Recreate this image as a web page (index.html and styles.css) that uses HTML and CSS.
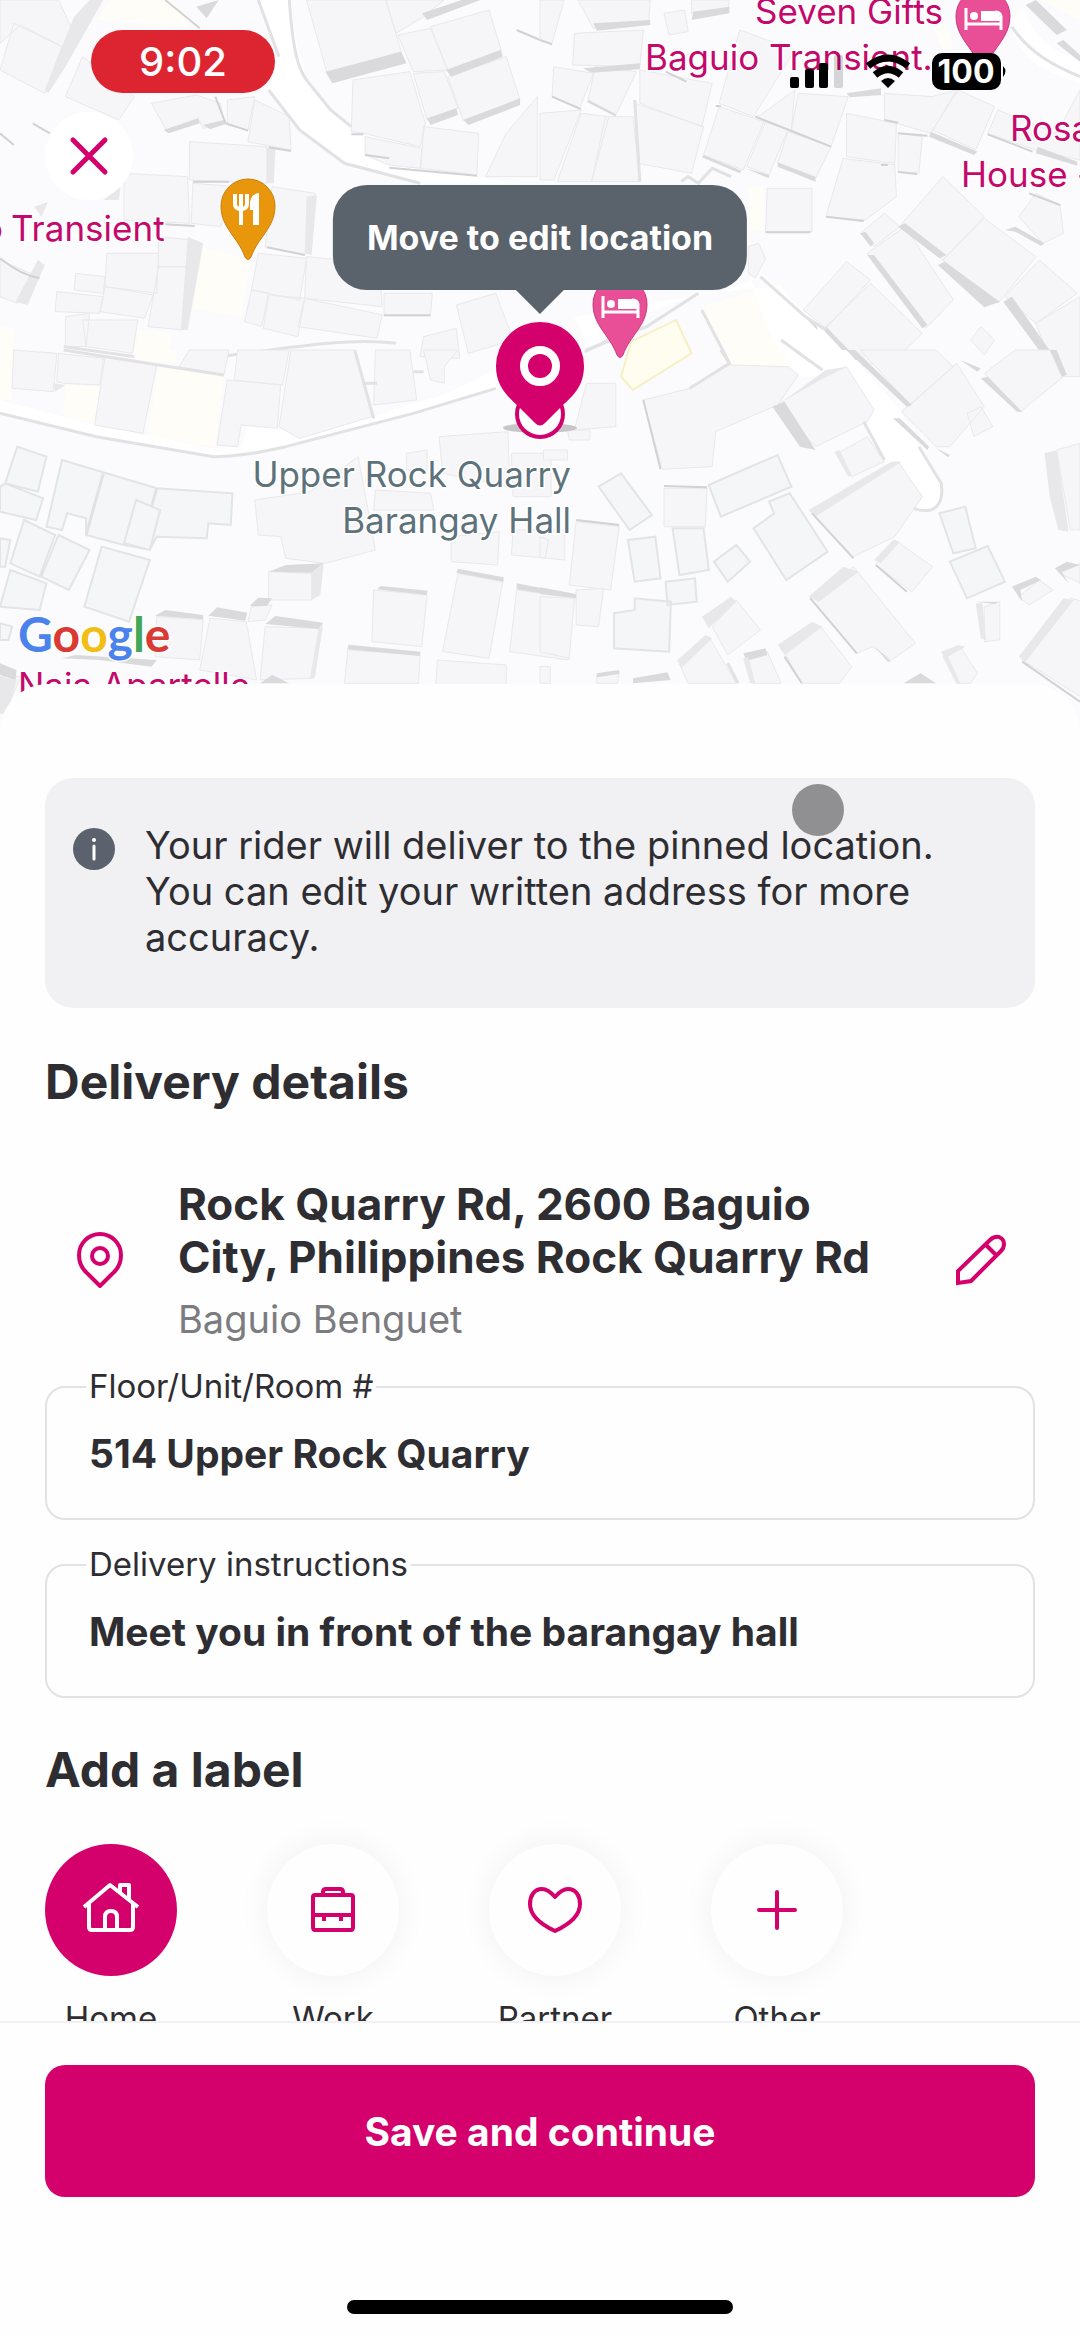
FILE: index.html
```html
<!DOCTYPE html>
<html lang="en">
<head>
<meta charset="utf-8">
<meta name="viewport" content="width=device-width, initial-scale=1">
<title>Delivery address</title>
<link rel="stylesheet" href="styles.css">
</head>
<body>
<div class="screen">
  <header class="map">
    <svg class="map-canvas" viewBox="0 0 1080 732" preserveAspectRatio="xMidYMin slice" aria-hidden="true">
      <rect width="1080" height="732" fill="#fbfbfd"/>
      <!-- north-west -->
      <g transform="scale(.3444 .3333)">
        <path class="garden" d="M590 740L725 780 700 950 560 925ZM320 0H500L550 80 280 60ZM400 990L495 1000V1080H390ZM0 980L40 985V1150H0ZM890 0H960L920 40Z"/>
        <path class="road" d="M750 0L810 170 780 270 870 390 1000 490 1220 550H1500L1385 530 1130 495 1050 400 960 330 885 220 860 120 840 0Z"/>
        <path class="house" d="M40 70L180 140 130 280 0 210ZM0 0H170L210 90 180 140 60 75 0 130ZM240 170L390 290 345 360 190 290ZM440 310L570 285 640 310 650 365 590 385 575 355 485 395ZM660 300L740 290 720 390 660 375ZM740 300L840 350 845 450 720 425ZM550 425L775 440V550L550 540ZM560 550L690 560 640 680 555 670ZM360 520L545 530 550 670 360 660ZM790 560L915 580 885 765 770 740ZM310 760H460L455 880 305 860ZM460 710L560 720 545 800H460ZM460 800H545L530 990 430 980ZM220 820L305 830 300 880 215 870ZM165 875L300 890 290 940 160 935ZM305 860L445 885 420 955 290 935ZM750 760L890 775 870 900 730 870ZM730 870L780 880 760 980 710 965ZM780 885L885 895 865 1010 765 985ZM890 770L1100 790 1110 920 885 895ZM885 895L1110 945 1095 1015 865 980ZM1115 880H1255L1250 948H1115ZM1325 915L1440 880 1490 1020 1360 1060ZM1230 1010L1325 985 1335 1075 1220 1070ZM890 0H1120L1165 155 950 220ZM1120 0H1290L1230 50 1150 100ZM1250 80L1420 30 1455 150 1300 210ZM1155 105L1250 85 1300 210 1200 215ZM1300 230L1470 170 1510 300 1345 360ZM1200 220L1290 215 1330 325 1240 360ZM1025 240L1190 215 1235 370 1220 440 1055 400 1020 395ZM1060 410L1225 445 1220 505 1130 495 1060 465ZM1230 380L1390 400 1385 525 1222 505ZM1470 400L1560 290V530L1410 530ZM0 780L110 830 50 910 0 890ZM190 950L260 940 250 1040 190 1040ZM240 960H400L385 1060 250 1040Z"/>
        <path class="shade soft" d="M215 50L260 0H300L190 200 140 280 130 270ZM775 445H800L795 550H775ZM890 590L920 585 905 765 885 760ZM545 710L590 730 545 990H525ZM100 620L140 605 120 650ZM300 600L350 560 345 600ZM45 905L110 780 130 795 80 915Z"/>
        <path class="shade" d="M945 215L1165 155 1180 190 965 250ZM1225 40L1340 0H1395L1240 60ZM1295 210L1455 150 1460 170 1310 230ZM1240 355L1325 325 1330 345 1250 375ZM1345 360L1510 295V315L1360 375ZM475 390L575 355 580 370 490 400ZM590 375L650 360 655 372 610 388ZM570 20L635 0 600 55Z"/>
        <path class="edge" d="M1500 90L1568 120M0 400L40 435M1060 465L1130 475M1130 503L1385 527M1020 403H1055M780 442L845 453M560 545H665M480 673L565 678M775 742L885 765M1115 946H1250M0 775Q60 825 115 835M480 0L580 85M95 370L145 400M625 290L655 370 720 392"/>
        <path class="kerb" d="M750 0L810 170M780 270L870 390 1000 490 1220 550M840 0C850 150 865 205 890 240L960 330 1020 380M185 1040L460 1080M560 1080C800 1050 1000 1010 1150 1030"/>
      </g>
      <!-- north-east -->
      <g transform="translate(540 0) scale(.3444 .3333)">
        <path class="garden" d="M470 920L700 850 740 1130 550 1130ZM605 560H650V690H610ZM1140 80L1180 70 1200 140 1170 150ZM1450 0H1568V60Z"/>
        <path class="road" d="M140 1050L310 940 460 880 700 860 760 940 640 830 540 870 100 950ZM610 830L650 830 830 990 940 1130H740L650 960ZM1365 80C1400 190 1480 220 1568 250V180C1470 150 1430 100 1400 20Z"/>
        <path class="house" d="M110 0H320L315 70 155 85ZM360 40L420 30 430 95 375 105ZM440 0H550L545 30 440 40ZM100 100L300 90 290 200 95 195ZM0 0H70L35 130 0 120ZM40 200L155 220 115 325 35 290ZM160 200L280 215 220 345 140 300ZM290 210L500 250 470 380 290 310ZM275 310L475 380 440 520 285 490ZM0 340L120 330 40 540 0 540ZM120 340L200 350 150 545H50ZM190 350H270L290 545H150ZM580 90L740 150 620 350 520 310ZM750 280L895 290 845 440 730 390ZM625 350L640 345 740 270 730 390ZM520 320L650 365 590 510 475 465ZM655 365L720 390 665 525 600 500ZM720 395L845 440 800 535 690 490ZM890 340L1035 370 1030 490 890 470ZM880 475L1030 495 1035 590 945 660 830 650ZM1040 400L1110 410 1100 520 1040 515ZM1000 280L1140 290 1210 270 1135 400 1000 360ZM1215 270L1320 320 1265 450 1140 390ZM1330 330L1500 400 1568 270V480L1440 450 1300 400ZM660 565H790V695H655ZM605 740L635 730 655 775 625 835 605 820ZM930 700L1000 640 1045 680 970 740ZM1060 660L1170 530 1290 650 1170 780 1045 680ZM950 760L1060 680 1200 900 1120 985ZM1170 780L1290 655 1440 770 1330 910ZM765 930L890 785 960 840 830 985ZM830 980L960 850 1110 1000 1050 1060 940 1100ZM1350 890L1450 780 1560 880 1440 970ZM1440 970L1568 890V1130H1500ZM1390 650L1440 580 1510 615 1520 700 1460 730ZM1280 980L1320 1020 1290 1065 1250 1020Z"/>
        <path class="shade" d="M155 70L320 60V75L165 92ZM445 35L550 20V40L440 60ZM125 205L290 190V208L150 218ZM1410 15L1440 0 1530 90 1500 105ZM1500 130L1520 120 1568 165V185ZM1040 680L1060 670 1180 765 1160 775ZM1155 795L1175 785 1335 905 1290 922ZM950 765H970L1125 975 1110 985ZM1345 905L1370 890 1500 1080H1470ZM1135 395L1270 455 1260 465 1130 410ZM1445 440L1560 485V497L1440 460ZM690 487L800 530V545L690 500ZM595 505L665 525V535ZM475 465L585 512 580 520 470 472ZM140 300L220 342V350L135 305ZM1350 690L1380 680 1465 730 1455 738 1380 695ZM930 700L945 695 970 730 960 740ZM755 935L805 980V990ZM830 980L925 1080H905L825 992ZM890 280L990 265V285L900 292Z"/>
        <path class="edge" d="M0 120L35 133M35 290L118 327M625 350L845 440M830 650L940 663M655 697H785M1040 400L1125 407M1300 403L1430 455M990 495H1010M1040 516L1095 522M1420 580L1510 615M365 215L425 245M510 318H525M1000 360L1040 368"/>
        <path class="kerb" d="M135 1050L310 980 460 880M640 830L770 950 830 990M470 930L550 1090M700 1020L780 1080M275 300L290 545M1370 80C1420 160 1500 200 1568 230M410 545L430 530 460 550 500 505 555 530"/>
        <path d="M265 1025L395 960 440 1060 270 1170 235 1130Z" fill="#fefdf0" stroke="#f6f0c4" stroke-width="2" vector-effect="non-scaling-stroke"/>
      </g>
      <!-- south-west -->
      <g transform="translate(0 350) scale(.3444 .3333)">
        <path class="garden" d="M460 45L650 80 625 290 430 260ZM190 105L290 110 275 220 185 205ZM390 0H515L510 40 390 30ZM0 0H35V150H0Z"/>
        <path class="road" d="M0 150L275 225 615 295 700 290 720 225 830 240 850 270 1080 200 1300 130 1440 60V115L1200 190 830 290 620 320 280 260 0 190Z"/>
        <path class="house" d="M40 0L165 10 155 125 35 115ZM170 10L300 25 290 105 185 100 165 95ZM305 20L455 45 415 250 275 225ZM660 90L815 105 805 235 700 225 690 290 630 285ZM550 0H665L650 75 520 50ZM690 0H840L820 105 680 90ZM845 0H1030L1080 200 870 265 810 230ZM1090 0H1190L1210 150 1085 165ZM1230 0H1330L1290 50V100L1250 90ZM1275 260L1475 245 1480 410 1285 370ZM1485 310H1600V440H1490ZM1180 310L1240 300V360H1180ZM740 450L900 425 1040 320 1090 600 945 640 830 625 815 560 750 555ZM1090 420L1250 430 1260 480 1085 480ZM1310 560L1450 545 1445 645 1310 635ZM1490 540H1640V630L1485 615ZM1085 720L1240 735 1225 890 1080 875ZM1330 670L1460 695 1420 925 1285 905ZM1500 720L1650 740V930L1480 905ZM1010 900L1220 915 1215 1000H1000ZM1270 930L1470 945V1010H1265ZM455 800L590 810 580 930 450 920ZM610 805L715 815 745 990 580 960ZM770 830L935 835 910 985 755 990ZM780 665L905 670V750H780ZM730 770L790 765 770 810 720 815ZM0 980L60 980 15 1090H0Z"/>
        <path class="house cool" d="M50 290L135 320 110 425 15 400ZM15 400L125 445 105 510 0 485V410ZM180 330L455 415 675 430 670 525 605 520 600 565 455 560 435 600 360 585 250 555 250 505 195 490 180 540 135 530ZM395 450L465 480 435 600 360 580ZM70 510L160 555 115 680 30 640ZM170 555L260 600 200 720 120 680ZM295 590L435 630 375 815 245 770ZM30 660L135 700 115 780 0 770ZM0 565L30 570 15 650H0ZM0 820L35 830 25 870H0Z"/>
        <path class="shade" d="M780 665L830 645 940 640 905 668ZM725 768L750 743 790 745 775 768ZM450 797L480 780 590 795V808ZM605 797L630 772 718 788 712 812ZM770 822L800 798 938 818 925 837ZM1095 718L1105 708 1242 722 1238 735ZM1325 668L1330 656 1462 682V695ZM1500 700L1600 720V735L1500 718ZM1008 898L1012 884 1222 905 1218 918ZM0 940L48 960 45 990 0 975ZM180 925L220 915 455 930 440 950 290 930ZM755 1000L790 975 840 1000Z"/>
        <path class="shade soft" d="M905 668L940 640 930 735 905 750ZM925 837L938 820 915 980 900 985ZM0 980L48 990 20 1090 0 1090ZM155 100L190 105 160 125ZM1455 230L1500 220 1568 232V240Z"/>
        <path class="kerb" d="M0 190L280 260 620 320C700 320 760 305 830 290L1200 190 1440 115M1030 0L1085 205M185 0L460 45 650 75M1060 100H1095M1200 65H1230M300 370L250 555M455 415L440 470"/>
      </g>
      <!-- south-east -->
      <g transform="translate(540 350) scale(.3444 .3333)">
        <path class="garden" d="M550 0H710V45H560Z"/>
        <path class="road" d="M740 0H890L1040 170 1100 290 1165 400C1175 470 1140 495 1085 475L1000 330 940 215 820 60Z"/>
        <path class="house" d="M300 150L435 115 550 45 720 50 750 75 690 165 510 245 500 350 355 358ZM690 165L710 150 820 85 890 50 970 180 950 215 800 290ZM865 310L950 260 1000 335 905 380ZM790 490L1040 335 1110 440 1030 560 910 620ZM1050 185L1210 40 1290 170 1190 290 1150 290ZM1290 70L1380 0H1490L1520 80 1395 185ZM930 0H1150L1200 50 1075 165ZM1240 190L1280 170 1315 230 1260 260ZM1500 300L1568 280V540H1540ZM360 415L485 415 480 530H360ZM105 515L230 530 205 720 85 705ZM0 740L100 745 85 925 0 905ZM105 720L185 715 170 830 105 825ZM785 745L910 650 1090 880 1020 930 965 890 920 910ZM975 645L1030 570 1140 650 1080 725ZM500 830L570 750 640 840 545 915ZM400 930L490 860 570 1000H430ZM700 890L815 830 905 950 870 1000H760ZM600 930L660 905 700 1000H620ZM1170 920L1220 890 1270 970 1250 1000H1210ZM1290 770L1335 755V870L1290 875ZM1390 740L1450 690 1490 720 1420 765ZM1510 670L1568 640V700ZM1400 930L1540 745 1600 760V1060ZM0 560L25 570 15 625 0 620ZM135 100H220V230L100 240ZM80 240H145V270H85ZM10 300L80 300V330H10ZM165 975L230 965 225 1000H165ZM0 950H30V1000H0Z"/>
        <path class="house cool" d="M170 410L235 370 325 495 260 540ZM490 405L690 315 730 410 525 500ZM620 535L680 490 665 455 725 430 835 605 715 690ZM385 535H475L490 660 405 675ZM255 570L335 560 350 685 275 695ZM505 635L570 585 610 635 545 695ZM365 695L450 685 455 755 370 765ZM215 790L275 780V745L380 755 375 905 215 895ZM1160 490L1235 470 1265 595 1200 610ZM1190 635L1300 588 1350 695 1240 745Z"/>
        <path class="shade" d="M675 170L710 155 800 300 755 290ZM1025 205H1045L1130 290 1125 300ZM1150 295L1190 315 1185 322ZM890 0H915L1080 165 1065 170ZM1220 30L1280 55 1270 65ZM1280 85L1300 80 1400 185H1385ZM165 970L230 960V972L165 982ZM270 985L370 967 380 990 270 1000ZM0 712L105 732V745L0 732ZM590 910L655 895 660 915 600 932ZM1055 1000L1105 970 1150 1000ZM1265 755H1330L1320 762ZM1370 710L1440 680 1455 690 1395 720 1400 755ZM1495 655L1530 635 1568 645 1515 665 1535 700ZM970 888L1020 935H1010ZM1480 0H1500L1530 75 1515 80Z"/>
        <path class="shade soft" d="M710 150L830 60 890 50 820 85ZM780 480L1020 335 1050 335 800 500ZM780 740L880 650 925 665 810 755ZM470 800L555 740 570 755 490 835ZM400 930L480 855 500 865 410 955ZM690 885L790 815 820 830 710 915ZM1390 920L1520 745 1550 750 1410 935ZM1465 310L1500 300 1535 545 1505 540 1480 440ZM1165 905L1215 885 1235 890 1185 920 1220 1000H1210ZM855 305L870 300 905 375 895 380ZM970 630L1025 570 1045 575 990 640ZM1265 760H1285L1295 870 1280 865ZM590 925L605 920 625 1000H610Z"/>
        <path class="edge" d="M105 510L230 525M360 408L485 412M785 745L920 910M1400 935L1568 1055M975 645L1065 725M790 490L910 625M300 150L350 358M710 920L760 1000"/>
        <path class="kerb" d="M740 0L820 60M940 215L1000 330M1100 290L1165 400C1175 470 1140 495 1085 475M435 115L550 40 525 0M130 5L200 -30M545 940L575 1000"/>
      </g>
      <g class="place-label">
        <text x="-18" y="241" fill="#c4086c">o</text>
        <text x="11" y="241" fill="#c4086c">Transient</text>
        <text x="943" y="24" text-anchor="end" fill="#c4086c">Seven Gifts</text>
        <text x="645" y="70" fill="#c4086c">Baguio Transient...</text>
        <text x="1010" y="141" fill="#c4086c">Rosa</text>
        <text x="961" y="187" fill="#c4086c">House</text>
        <text x="1077" y="187" fill="#c4086c">-</text>
        <text x="18" y="698" fill="#c4086c">Naia Apartelle</text>
        <text x="571" y="487" text-anchor="end" fill="#5d727b">Upper Rock Quarry</text>
        <text x="571" y="533" text-anchor="end" fill="#5d727b">Barangay Hall</text>
      </g>
      <text class="brand" x="18" y="652"><tspan fill="#4a83ec">G</tspan><tspan fill="#d93a34">o</tspan><tspan fill="#f2bd14">o</tspan><tspan fill="#4a83ec">g</tspan><tspan fill="#3fa757">l</tspan><tspan fill="#d93a34">e</tspan></text>
      <g transform="translate(248 208)">
        <path d="M0 -29A27 27 0 0 1 27 -2C27 20 10 29 3 49Q0 54 -3 49C-10 29 -27 20 -27 -2A27 27 0 0 1 0 -29Z" fill="#e8960c" stroke="#c9800a"/>
        <path d="M-13 -14V-4Q-13 1 -7 1T-1 -4V-14M-7 -14V17" fill="none" stroke="#fff" stroke-width="4"/>
        <path d="M5 17V2H2V-6Q3 -14 11 -15V17Z" fill="#fff"/>
      </g>
      <g id="bed" transform="translate(620 306)">
        <path d="M0 -29A27 27 0 0 1 27 -2C27 20 10 29 3 49Q0 54 -3 49C-10 29 -27 20 -27 -2A27 27 0 0 1 0 -29Z" fill="#e84f96" stroke="#c93a7d"/>
        <path d="M-17 -10V12M-17 6H18M18 12V-2Q17 -6 12 -6" fill="none" stroke="#fff" stroke-width="3"/>
        <circle cx="-9" cy="-2" r="4" fill="#fff"/><path d="M-2 -7H11Q17 -6 17 1V3H-2Z" fill="#fff"/>
      </g>
      <use href="#bed" x="363" y="-288"/>
      <ellipse cx="540" cy="428" rx="37" ry="5" fill="#c6c6ca"/>
      <circle cx="540" cy="414" r="23" fill="#fff" stroke="#d1006c" stroke-width="4"/>
      <path d="M540 322A44 44 0 0 1 584 366C584 386 573 396 562 406L545 423Q540 428 535 423L518 406C507 396 496 386 496 366A44 44 0 0 1 540 322Z" fill="#d4006c"/>
      <circle cx="540" cy="366" r="16" fill="none" stroke="#fff" stroke-width="8"/>
    </svg>

    <div class="status">
      <time class="clock">9:02</time>
      <svg class="signals" viewBox="0 0 220 40" role="img" aria-label="Signal and Wi-Fi">
        <rect x="2" y="27" width="9" height="11" rx="2"/><rect x="17" y="19" width="9" height="19" rx="2"/><rect x="31" y="13" width="9" height="25" rx="2"/><rect x="46" y="5" width="9" height="33" rx="2" opacity=".15"/>
        <path d="M80 16Q100 0 120 16M87 25Q100 14 113 25" fill="none" stroke="#000" stroke-width="7"/><path d="M93 31Q100 25 107 31L100 38Z"/>
        <rect x="144" y="3" width="69" height="37" rx="10"/><path d="M215 16Q220 21 215 27Z"/>
        <text x="178" y="33" text-anchor="middle" class="charge">100</text>
      </svg>
    </div>
    <button class="close" type="button" aria-label="Close">
      <svg viewBox="0 0 40 40"><path d="M4 4L36 36M36 4L4 36"/></svg>
    </button>
    <div class="tooltip">Move to edit location</div>
  </header>

  <main class="sheet">
    <p class="notice">
      <svg class="notice-icon" viewBox="0 0 42 42" aria-hidden="true"><circle cx="21" cy="21" r="21" fill="#5b616d"/><circle cx="21" cy="12" r="2" fill="#fff"/><path d="M21 18V31" stroke="#fff" stroke-width="3" stroke-linecap="round"/></svg>
      <span>Your rider will deliver to the pinned location. You can edit your written address for more accuracy.</span>
      <i class="touch"></i>
    </p>

    <h2>Delivery details</h2>
    <div class="address">
      <svg class="address-pin" viewBox="0 0 48 56" aria-hidden="true"><path d="M24 2A21 21 0 0 1 45 23C45 33 41 38 36 42L24 54 12 42C7 38 3 33 3 23A21 21 0 0 1 24 2Z"/><circle cx="24" cy="24" r="8"/></svg>
      <div class="address-text">
        <strong>Rock Quarry Rd, 2600 Baguio City, Philippines Rock Quarry Rd</strong>
        <span>Baguio Benguet</span>
      </div>
      <button class="edit" type="button" aria-label="Edit address">
        <svg viewBox="0 0 52 52"><path d="M3 49V37L35 6Q39 2 44 3 49 5 49 10 49 14 46 17L16 47ZM31 11L41 21"/></svg>
      </button>
    </div>

    <div class="fields">
      <div class="field">
        <label for="unit">Floor/Unit/Room #</label>
        <input id="unit" type="text" value="514 Upper Rock Quarry">
      </div>
      <div class="field">
        <label for="notes">Delivery instructions</label>
        <input id="notes" type="text" value="Meet you in front of the barangay hall">
      </div>
    </div>

    <h2 class="label-title">Add a label</h2>
    <div class="labels">
      <label class="tag"><input type="radio" name="tag" checked>
        <span class="disc"><svg viewBox="0 0 60 60"><path d="M3 27L29 5 57 27M8 24V47Q8 50 11 50H49Q52 50 52 47V24M39 12V5H48V20M24 50V37Q24 31 30 31T36 37V50"/></svg></span>Home</label>
      <label class="tag"><input type="radio" name="tag">
        <span class="disc"><svg viewBox="0 0 60 60"><path d="M12 15H48Q50 15 50 17V47Q50 50 48 50H12Q10 50 10 47V17Q10 15 12 15ZM20 15V12Q20 9 23 9H37Q40 9 40 12V15M10 35H50M21 35V41M38 35V41"/></svg></span>Work</label>
      <label class="tag"><input type="radio" name="tag">
        <span class="disc"><svg viewBox="0 0 60 60"><path d="M30 17C24 10 20 9 17 9 9 9 5 16 5 24 5 36 17 45 30 51 43 45 55 36 55 24 55 16 51 9 43 9 40 9 36 10 30 17Z"/></svg></span>Partner</label>
      <label class="tag"><input type="radio" name="tag">
        <span class="disc"><svg viewBox="0 0 60 60"><path d="M30 12V48M12 30H48" stroke-linecap="round"/></svg></span>Other</label>
    </div>
  </main>

  <footer class="actions">
    <button class="save" type="button">Save and continue</button>
    <div class="home-bar"></div>
  </footer>
</div>
</body>
</html>
```

FILE: styles.css
```css
:root {
  --pink: #d4006c;
  --ink: #2e2d32;
  --line: #e2e2e4;
  --edge: 45px;
}

* { box-sizing: border-box; }

body {
  margin: 0;
  font-family: Inter, Roboto, sans-serif;
  color: var(--ink);
  background: #fefefe;
}

button { border: 0; padding: 0; font: inherit; cursor: pointer; }
svg { display: block; }

.screen {
  display: flex;
  flex-direction: column;
  height: 100vh;
  overflow: hidden;
}

/* Map */
.map {
  position: relative;
  flex: none;
  height: 732px;
  overflow: hidden;
}
.map-canvas { position: absolute; inset: 0; width: 100%; height: 100%; }
.map-canvas path { vector-effect: non-scaling-stroke; }
.house { fill: #f6f5f8; stroke: #e9e8eb; stroke-width: 1; }
.house.cool { fill: #f5f6f8; stroke: #e3e4e6; stroke-width: 2; }
.garden { fill: #fefdf7; }
.road { fill: #fff; }
.shade { fill: #dad9db; }
.shade.soft { fill: #e8e7ea; }
.edge { fill: none; stroke: #d2d2d5; stroke-width: 2; }
.kerb { fill: none; stroke: #e2e2e5; stroke-width: 3; }
.place-label {
  font-size: 35px;
  paint-order: stroke;
  stroke: #fff;
  stroke-width: 3px;
}
.brand {
  font-family: Lato, sans-serif;
  font-size: 48px;
  font-weight: 700;
  paint-order: stroke;
  stroke: #fff;
  stroke-width: 3px;
}

.status {
  position: relative;
  display: flex;
  justify-content: space-between;
  padding: 30px 72px 0 91px;
}
.clock {
  width: 184px;
  border-radius: 32px;
  background: #dd2532;
  color: #fff;
  font-size: 40px;
  font-weight: 500;
  line-height: 63px;
  text-align: center;
}
.signals { width: 220px; height: 40px; margin-top: 20px; }
.charge { fill: #fff; font-size: 32px; font-weight: 700; }

.close {
  position: relative;
  display: grid;
  place-items: center;
  width: 88px;
  height: 88px;
  margin: 19px 0 0 var(--edge);
  border-radius: 50%;
  background: #fff;
}
.close svg { width: 40px; fill: none; stroke: var(--pink); stroke-width: 5; stroke-linecap: round; }

.tooltip {
  position: absolute;
  top: 185px;
  left: 50%;
  transform: translateX(-50%);
  padding: 0 34px;
  border-radius: 34px;
  background: #5a626b;
  color: #fff;
  font-size: 34px;
  font-weight: 700;
  line-height: 105px;
  white-space: nowrap;
}
.tooltip::after {
  content: "";
  position: absolute;
  top: 100%;
  left: 50%;
  margin-left: -24px;
  border: 24px solid transparent;
  border-top-color: #5a626b;
  border-bottom: 0;
}

/* Sheet */
.sheet {
  position: relative;
  flex: 1;
  min-height: 0;
  overflow: hidden;
  margin-top: -48px;
  padding: 94px var(--edge) 0;
  border-radius: 48px 48px 0 0;
  background: #fefefe;
}

.notice {
  position: relative;
  display: flex;
  gap: 30px;
  margin: 0;
  padding: 44px 80px 48px 28px;
  border-radius: 28px;
  background: #f1f1f3;
  font-size: 38px;
  line-height: 46px;
}
.notice-icon { flex: none; width: 42px; margin-top: 6px; align-self: flex-start; }
.touch {
  position: absolute;
  top: 6px;
  right: 191px;
  width: 52px;
  height: 52px;
  border-radius: 50%;
  background: #909092;
}

h2 {
  margin: 44px 0 66px;
  font-size: 48px;
  font-weight: 700;
  line-height: 60px;
}
h2.label-title { margin: 42px 0 44px; }

.address {
  display: flex;
  align-items: center;
  margin-bottom: 44px;
  padding: 0 28px 0 31px;
}
.address-pin { flex: none; width: 48px; fill: none; stroke: var(--pink); stroke-width: 4; }
.address-text { flex: 1; display: grid; gap: 12px; margin: 0 60px 0 54px; }
.address-text strong { font-size: 44px; font-weight: 700; line-height: 53px; }
.address-text span { color: #7c7c80; font-size: 38px; line-height: 46px; }
.edit { flex: none; background: none; }
.edit svg { width: 52px; fill: none; stroke: var(--pink); stroke-width: 4; }

.fields { display: grid; gap: 44px; }
.field { position: relative; }
.field label {
  position: absolute;
  top: -20px;
  left: 41px;
  padding: 0 3px;
  background: #fefefe;
  font-size: 33px;
  line-height: 40px;
}
.field input {
  display: block;
  width: 100%;
  height: 134px;
  padding: 0 42px;
  border: 2px solid var(--line);
  border-radius: 20px;
  background: none;
  color: inherit;
  font: 700 39px/46px Inter, Roboto, sans-serif;
}

.labels { display: flex; gap: 90px; }
.tag {
  position: relative;
  display: grid;
  justify-items: center;
  gap: 22px;
  width: 132px;
  font-size: 33px;
  line-height: 40px;
}
.tag input { position: absolute; opacity: 0; }
.disc {
  display: grid;
  place-items: center;
  width: 132px;
  height: 132px;
  border-radius: 50%;
  background: #fefefe;
  box-shadow: 0 0 28px 6px rgb(50 20 80 / 4%);
}
.disc svg { width: 60px; fill: none; stroke: var(--pink); stroke-width: 4; stroke-linejoin: round; }
.tag input:checked + .disc { background: var(--pink); box-shadow: none; }
.tag input:checked + .disc svg { stroke: #fff; }

/* Footer */
.actions {
  flex: none;
  padding: 42px var(--edge) 22px;
  border-top: 2px solid #f1f1f3;
  background: #fefefe;
}
.save {
  display: block;
  width: 100%;
  height: 132px;
  border-radius: 20px;
  background: var(--pink);
  color: #fff;
  font-size: 39px;
  font-weight: 700;
}
.home-bar {
  width: 386px;
  height: 14px;
  margin: 103px auto 0;
  border-radius: 7px;
  background: #000;
}
```
